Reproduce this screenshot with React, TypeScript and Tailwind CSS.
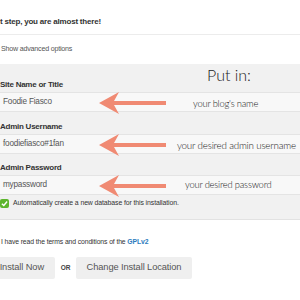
import React from 'react';

const Arrow: React.FC<{ className?: string }> = ({ className }) => (
  <svg className={className} width="70" height="24" viewBox="0 0 70 24" fill="none">
    <path d="M0 12 L20 1 L15 10 L67 10 L67 14 L15 14 L20 23 Z" fill="#f08a73" />
  </svg>
);

const Field: React.FC<{ label: string; value: string; note: string; noteClass: string; className?: string }> = ({
  label,
  value,
  note,
  noteClass,
  className,
}) => (
  <div className={className}>
    <div className="h-[14px] leading-[14px] text-[8px] tracking-[-0.25px] font-bold text-[#333]">{label}</div>
    <div className="relative h-[20px] bg-[#f8f8f8] border-y border-[#e4e4e4] flex items-center pl-[3px] text-[8.2px] tracking-[-0.2px] text-[#555]">
      <span>{value}</span>
      <Arrow className="absolute left-[99px] top-[-2px]" />
      <span
        className={`absolute whitespace-nowrap text-[#1a1a1a] font-light ${noteClass}`}
        style={{ fontFamily: '"Lato", "Noto Sans", sans-serif' }}
      >
        {note}
      </span>
    </div>
  </div>
);

export default function App() {
  return (
    <div
      className="w-[300px] h-[300px] overflow-hidden bg-white"
      style={{ fontFamily: '"Liberation Sans", Arial, sans-serif' }}
    >
      <div className="pt-[15px] h-[14px] box-content leading-[14px] text-[8px] tracking-[-0.2px] font-bold text-[#333]">
        t step, you are almost there!
      </div>
      <div className="mt-[5px] border-t border-[#ececec]" />
      <div className="mt-[7px] h-[14px] leading-[14px] text-[7.1px] tracking-[-0.2px] text-[#555] pl-[1px]">
        Show advanced options
      </div>

      <div className="relative mt-[8px] bg-[#f1f1f1] pt-[14px] pb-[8px] border-b border-[#e2e2e2]">
        <div
          className="absolute left-[207px] top-[-1px] text-[16px] font-light text-[#1a1a1a]"
          style={{ fontFamily: '"Lato", "Noto Sans", sans-serif' }}
        >
          Put in:
        </div>
        <Field
          label="Site Name or Title"
          value="Foodie Fiasco"
          note="your blog's name"
          noteClass="left-[193px] top-[4px] text-[9.4px]"
        />
        <Field
          className="mt-[8px]"
          label="Admin Username"
          value="foodiefiasco#1fan"
          note="your desired admin username"
          noteClass="left-[177px] top-[3px] text-[9.8px]"
        />
        <Field
          className="mt-[7px]"
          label="Admin Password"
          value="mypassword"
          note="your desired password"
          noteClass="left-[185px] top-[2px] text-[9.4px]"
        />
        <div className="h-[16px] flex items-center gap-[4px]">
          <span className="w-[9px] h-[9px] rounded-[2px] bg-[#5db52d] flex items-center justify-center">
            <svg width="7" height="7" viewBox="0 0 8 8">
              <path d="M1 4.2 L3.2 6.2 L7 1.8" stroke="white" strokeWidth="1.6" fill="none" />
            </svg>
          </span>
          <span className="text-[6.9px] tracking-[-0.1px] text-[#333]">
            Automatically create a new database for this installation.
          </span>
        </div>
      </div>

      <div className="mt-[16px] h-[12px] leading-[12px] text-[6.8px] tracking-[-0.1px] text-[#333] pl-[1px]">
        I have read the terms and conditions of the <span className="text-[#2b7bbd] font-bold">GPLv2</span>
      </div>

      <div className="mt-[9px] flex items-center -ml-[10px]">
        <div className="h-[22px] w-[65px] bg-[#efefef] rounded-[2px] flex items-center justify-end pr-[11px] text-[9.3px] tracking-[-0.1px] text-[#555]">
          Install Now
        </div>
        <div className="w-[21px] text-center text-[6.5px] font-bold text-[#444]">OR</div>
        <div className="h-[22px] w-[116px] bg-[#efefef] rounded-[2px] flex items-center justify-center text-[9.3px] tracking-[-0.1px] text-[#555]">
          Change Install Location
        </div>
      </div>
    </div>
  );
}
